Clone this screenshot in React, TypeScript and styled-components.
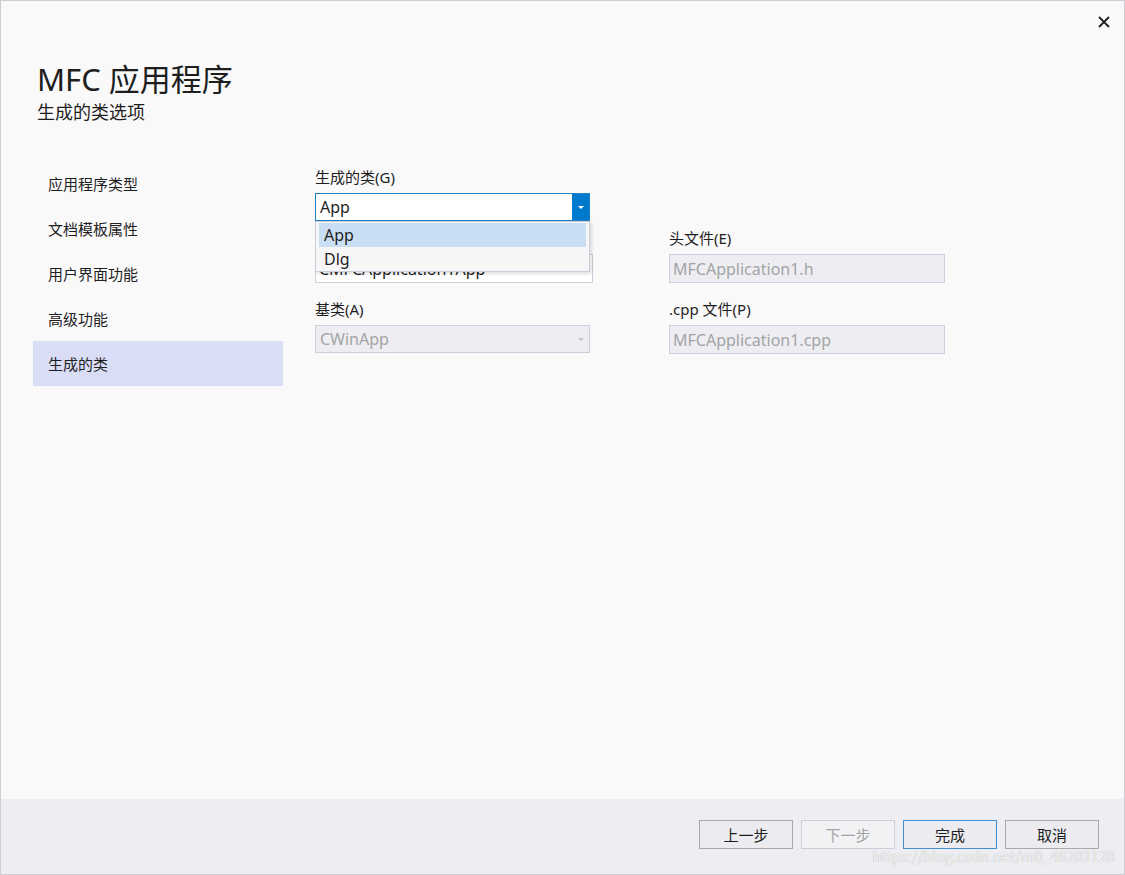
import React from "react";
import styled, { createGlobalStyle } from "styled-components";

const Global = createGlobalStyle`
  html, body { margin: 0; padding: 0; background: #f9f9f9; }
  * { box-sizing: border-box; }
  body {
    font-family: "Noto Sans", "Noto Sans CJK SC", sans-serif;
    color: #1e1e1e;
  }
`;

const Window = styled.div`
  position: relative;
  width: 1125px;
  height: 875px;
  border: 1px solid #cdcdd2;
  background: #f9f9fa;
  display: flex;
  flex-direction: column;
`;

const TitleBar = styled.div`
  height: 42px;
  display: flex;
  justify-content: flex-end;
  align-items: center;
  padding-right: 12px;
`;

const CloseButton = styled.button`
  width: 16px;
  height: 16px;
  border: 0;
  padding: 0;
  background: transparent;
  display: flex;
  align-items: center;
  justify-content: center;
  cursor: pointer;
`;

const Header = styled.header`
  padding: 16px 0 0 36px;
`;

const Title = styled.h1`
  margin: 0;
  font-size: 31px;
  font-weight: 400;
  line-height: 40px;
  color: #1e1e1e;
  font-family: "Noto Sans", "Noto Sans CJK SC", sans-serif;
`;

const Subtitle = styled.div`
  font-size: 18px;
  line-height: 24px;
  margin-top: 1px;
  color: #1e1e1e;
`;

const Main = styled.div`
  display: flex;
  margin-top: 37px;
  padding-left: 32px;
`;

const Sidebar = styled.nav`
  width: 250px;
  display: flex;
  flex-direction: column;
`;

const NavItem = styled.div<{ $active?: boolean }>`
  height: 45px;
  display: flex;
  align-items: center;
  padding-left: 15px;
  padding-bottom: 1px;
  font-size: 15px;
  color: #1e1e1e;
  background: ${(p) => (p.$active ? "#d9def6" : "transparent")};
`;

const Content = styled.div`
  margin-left: 32px;
  padding-top: 6px;
  display: grid;
  grid-template-columns: 277px 276px;
  column-gap: 77px;
  align-content: start;
`;

const Group = styled.div<{ $gap?: number }>`
  position: relative;
  display: flex;
  flex-direction: column;
  margin-top: ${(p) => p.$gap ?? 0}px;
`;

const Label = styled.label`
  font-size: 15px;
  line-height: 20px;
  height: 20px;
  margin-bottom: 6px;
  color: #1e1e1e;
`;

const Combo = styled.div<{ $focused?: boolean; $disabled?: boolean }>`
  width: 275px;
  height: 28px;
  display: flex;
  align-items: stretch;
  border: 1px solid ${(p) => (p.$focused ? "#1c7fc4" : "#cccedb")};
  background: ${(p) => (p.$focused ? "#ffffff" : p.$disabled ? "#eeeef2" : "#ffffff")};
`;

const ComboText = styled.div<{ $disabled?: boolean }>`
  flex: 1;
  display: flex;
  align-items: center;
  padding-left: 4px;
  font-size: 16px;
  color: ${(p) => (p.$disabled ? "#a2a4a5" : "#1e1e1e")};
`;

const ComboArrow = styled.div<{ $focused?: boolean }>`
  width: 17px;
  display: flex;
  align-items: center;
  justify-content: center;
  background: ${(p) => (p.$focused ? "#007acc" : "transparent")};
`;

const Arrow = styled.span<{ $color: string }>`
  width: 0;
  height: 0;
  border-left: 3px solid transparent;
  border-right: 3px solid transparent;
  border-top: 3px solid ${(p) => p.$color};
`;

const TextField = styled.div<{ $disabled?: boolean }>`
  width: ${(p) => (p.$disabled ? "276px" : "278px")};
  height: 29px;
  display: flex;
  align-items: center;
  padding-left: 3px;
  font-size: 16px;
  border: 1px solid #cccedb;
  background: ${(p) => (p.$disabled ? "#eeeef2" : "#ffffff")};
  color: ${(p) => (p.$disabled ? "#a2a4a5" : "#1e1e1e")};
  white-space: nowrap;
  overflow: hidden;
`;

const DropList = styled.div`
  position: absolute;
  left: 0;
  top: 54px;
  width: 275px;
  height: 51px;
  padding: 1px 3px;
  background: #f6f6f6;
  border: 1px solid #cccedb;
  box-shadow: 2px 2px 3px rgba(0, 0, 0, 0.12);
  z-index: 5;
`;

const DropItem = styled.div<{ $selected?: boolean }>`
  height: 24px;
  display: flex;
  align-items: center;
  padding-left: 5px;
  font-size: 16px;
  color: #1e1e1e;
  background: ${(p) => (p.$selected ? "#c9ddf3" : "transparent")};
`;

const Footer = styled.footer`
  margin-top: auto;
  height: 75px;
  background: #eeeef2;
  display: flex;
  justify-content: flex-end;
  align-items: flex-start;
  padding: 21px 25px 0 0;
  gap: 8px;
`;

const Button = styled.button<{ $primary?: boolean }>`
  width: 94px;
  height: 29px;
  font-family: "Noto Sans CJK SC", "Noto Sans", sans-serif;
  font-size: 15px;
  color: #1e1e1e;
  background: #ececf0;
  border: 1px solid ${(p) => (p.$primary ? "#3f8fd2" : "#a8a8ac")};
  padding: 0;
  &:disabled {
    color: #a2a4a5;
    border-color: #cccedb;
    background: #f2f2f4;
  }
`;

const Watermark = styled.div`
  position: absolute;
  right: 9px;
  bottom: 8px;
  font-family: "Noto Sans CJK SC", sans-serif;
  font-size: 14.5px;
  color: rgba(255, 255, 255, 0.85);
  text-shadow: 0 0 1px rgba(150, 150, 150, 0.9);
  pointer-events: none;
`;

const navItems = ["应用程序类型", "文档模板属性", "用户界面功能", "高级功能", "生成的类"];

export default function App() {
  return (
    <>
      <Global />
      <Window>
        <TitleBar>
          <CloseButton aria-label="关闭">
            <svg width="12" height="12" viewBox="0 0 12 12">
              <path d="M1 1 L11 11 M11 1 L1 11" stroke="#1e1e1e" strokeWidth="1.8" />
            </svg>
          </CloseButton>
        </TitleBar>
        <Header>
          <Title>MFC 应用程序</Title>
          <Subtitle>生成的类选项</Subtitle>
        </Header>
        <Main>
          <Sidebar>
            {navItems.map((t, i) => (
              <NavItem key={t} $active={i === navItems.length - 1}>
                {t}
              </NavItem>
            ))}
          </Sidebar>
          <Content>
            <Group>
              <Label>生成的类(G)</Label>
              <Combo $focused>
                <ComboText>App</ComboText>
                <ComboArrow $focused>
                  <Arrow $color="#ffffff" />
                </ComboArrow>
              </Combo>
              <DropList>
                <DropItem $selected>App</DropItem>
                <DropItem>Dlg</DropItem>
              </DropList>
            </Group>
            <div />
            <Group $gap={7}>
              <Label>类名(L)</Label>
              <TextField>CMFCApplication1App</TextField>
            </Group>
            <Group $gap={7}>
              <Label>头文件(E)</Label>
              <TextField $disabled>MFCApplication1.h</TextField>
            </Group>
            <Group $gap={16}>
              <Label>基类(A)</Label>
              <Combo $disabled>
                <ComboText $disabled>CWinApp</ComboText>
                <ComboArrow>
                  <Arrow $color="#c2c3c9" />
                </ComboArrow>
              </Combo>
            </Group>
            <Group $gap={16}>
              <Label>.cpp 文件(P)</Label>
              <TextField $disabled>MFCApplication1.cpp</TextField>
            </Group>
          </Content>
        </Main>
        <Footer>
          <Button>上一步</Button>
          <Button disabled>下一步</Button>
          <Button $primary>完成</Button>
          <Button>取消</Button>
        </Footer>
        <Watermark>https://blog.csdn.net/m0_46202128</Watermark>
      </Window>
    </>
  );
}
